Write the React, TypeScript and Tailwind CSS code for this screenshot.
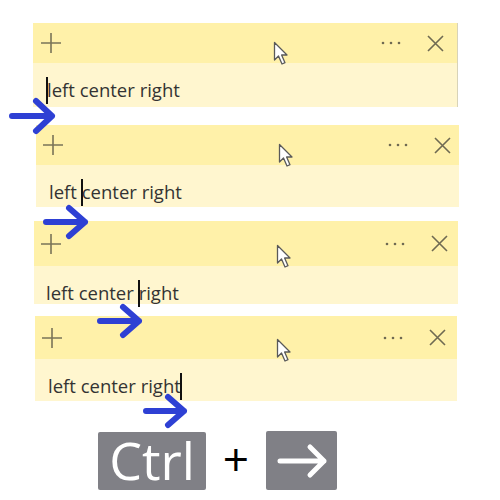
import * as React from "react";

const TEXT = "left center right";

function Pointer() {
  return (
    <svg width="18" height="26" viewBox="0 0 18 26">
      <path
        d="M1.5 1.5 L1.5 19 L5.5 15 L9 23 L12 21.7 L8.6 14 L14 14 Z"
        fill="#fff"
        stroke="#5a5a5a"
        strokeWidth="1.3"
        strokeLinejoin="round"
      />
    </svg>
  );
}

function Plus() {
  return (
    <svg width="22" height="22" viewBox="0 0 22 22">
      <path d="M11 1 V21 M1 11 H21" stroke="#7a7458" strokeWidth="1.6" />
    </svg>
  );
}

function Close() {
  return (
    <svg width="17" height="17" viewBox="0 0 17 17">
      <path d="M1 1 L16 16 M16 1 L1 16" stroke="#6f6a52" strokeWidth="1.6" />
    </svg>
  );
}

function Dots() {
  return (
    <svg width="20" height="4" viewBox="0 0 20 4">
      <circle cx="2" cy="2" r="1.3" fill="#6f6a52" />
      <circle cx="10" cy="2" r="1.3" fill="#6f6a52" />
      <circle cx="18" cy="2" r="1.3" fill="#6f6a52" />
    </svg>
  );
}

interface NoteProps {
  caret: number;
  headH: string;
  bodyH: string;
  className: string;
  padL: string;
  padR: string;
  textPad: string;
  pointer: string;
}

function Note({ caret, headH, bodyH, className, padL, padR, textPad, pointer }: NoteProps) {
  return (
    <div className={`relative ${className}`}>
      <div className={`flex items-center bg-[#fff1a9] ${headH} ${padL} ${padR}`}>
        <Plus />
        <div className="flex-1" />
        <Dots />
        <div className="w-[26px]" />
        <Close />
      </div>
      <div className={`flex items-start pt-[14px] bg-[#fff6cf] ${bodyH} ${textPad}`}>
        <span className="flex items-center h-[27px] whitespace-pre text-[18.5px] leading-none text-[#333] font-['Open_Sans',sans-serif]">
          {TEXT.slice(0, caret)}
          <span className="inline-block w-[2px] h-[27px] -mx-[1px] bg-[#111]" />
          {TEXT.slice(caret)}
        </span>
      </div>
      <div className={`absolute ${pointer}`}>
        <Pointer />
      </div>
    </div>
  );
}

function BlueArrow({ x1, x2, y, hx, hy }: { x1: number; x2: number; y: number; hx: number; hy: number }) {
  return (
    <path
      d={`M${x1} ${y} H${x2} M${hx} ${y - hy} L${x2} ${y} L${hx} ${y + hy}`}
      fill="none"
      stroke="#2e40d4"
      strokeWidth="6"
      strokeLinecap="round"
      strokeLinejoin="round"
    />
  );
}

export default function App() {
  return (
    <div className="relative w-[500px] h-[500px] bg-white overflow-hidden">
      <div className="flex flex-col pt-[23px]">
        <Note
          caret={0}
          className="ml-[33px] w-[425px] border-r border-[#d8d3b8]"
          headH="h-[40px]"
          bodyH="h-[44px]"
          padL="pl-[7px]"
          padR="pr-[13px]"
          textPad="pl-[14px]"
          pointer="left-[240px] top-[18px]"
        />
        <Note
          caret={5}
          className="ml-[36px] w-[423px] mt-[18px]"
          headH="h-[40px]"
          bodyH="h-[42px]"
          padL="pl-[6px]"
          padR="pr-[8px]"
          textPad="pl-[13px]"
          pointer="left-[242px] top-[18px]"
        />
        <Note
          caret={12}
          className="ml-[34px] w-[424px] mt-[14px]"
          headH="h-[45px]"
          bodyH="h-[38px]"
          padL="pl-[6px]"
          padR="pr-[10px]"
          textPad="pl-[12px]"
          pointer="left-[242px] top-[23px]"
        />
        <Note
          caret={17}
          className="ml-[35px] w-[422px] mt-[12px]"
          headH="h-[43px]"
          bodyH="h-[42px]"
          padL="pl-[6px]"
          padR="pr-[11px]"
          textPad="pl-[13px]"
          pointer="left-[241px] top-[22px]"
        />
        <div className="flex items-center mt-[30px] ml-[98px]">
          <div className="w-[108px] h-[58px] bg-[#808086] rounded-[2px] flex items-center justify-center">
            <span className="text-white text-[52px] leading-none font-['Open_Sans',sans-serif] -mt-[2px]">Ctrl</span>
          </div>
          <span className="w-[60px] text-center text-black text-[46px] leading-none font-['Open_Sans',sans-serif] -mt-[6px]">+</span>
          <div className="w-[71px] h-[59px] bg-[#808086] rounded-[2px] flex items-center justify-center">
            <svg width="56" height="40" viewBox="0 0 56 40">
              <path
                d="M6 20 H50 M36 6 L50 20 L36 34"
                fill="none"
                stroke="#fff"
                strokeWidth="5"
                strokeLinecap="round"
                strokeLinejoin="round"
              />
            </svg>
          </div>
        </div>
      </div>
      <svg className="absolute left-0 top-0 pointer-events-none" width="500" height="500" viewBox="0 0 500 500">
        <BlueArrow x1={12} x2={52} y={116} hx={36} hy={15} />
        <BlueArrow x1={46} x2={85} y={222} hx={69} hy={14} />
        <BlueArrow x1={100} x2={139} y={321} hx={123} hy={14} />
        <BlueArrow x1={146} x2={184} y={411} hx={168} hy={14} />
      </svg>
    </div>
  );
}
